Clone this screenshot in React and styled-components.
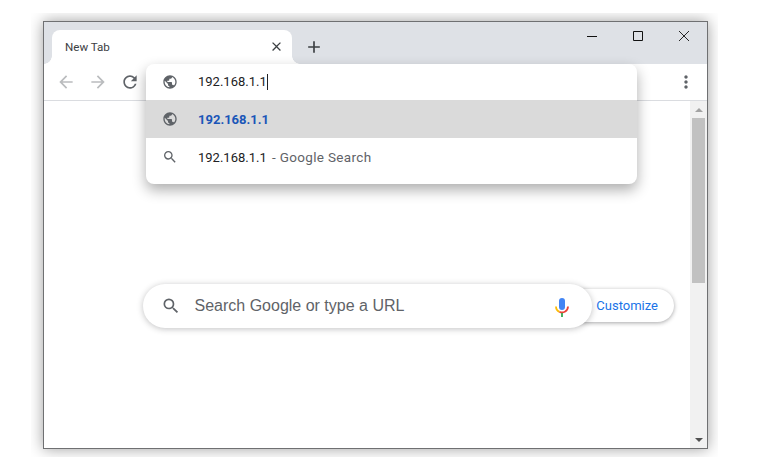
import React from "react";
import styled, { createGlobalStyle } from "styled-components";
import {
  MdAdd,
  MdArrowBack,
  MdArrowForward,
  MdClose,
  MdMoreVert,
  MdPublic,
  MdRefresh,
  MdSearch,
} from "react-icons/md";

const GlobalStyle = createGlobalStyle`
  html, body {
    margin: 0;
    padding: 0;
    width: 773px;
    height: 470px;
    overflow: hidden;
    background: #fff;
    font-family: Roboto, "Liberation Sans", sans-serif;
  }
`;

const ShadowClip = styled.div`
  box-sizing: border-box;
  width: 687px;
  height: 444px;
  margin: 13px 0 0 31px;
  padding: 8px 10px 8px 12px;
  overflow: hidden;
`;

const Window = styled.div`
  position: relative;
  box-sizing: border-box;
  height: 100%;
  display: flex;
  flex-direction: column;
  border: 1px solid #6f7072;
  background: #fff;
  box-shadow: 0 0 14px rgba(0, 0, 0, 0.38);
`;

const TitleBar = styled.div`
  height: 42px;
  flex: none;
  display: flex;
  align-items: flex-end;
  padding-left: 8px;
  background: #dee1e6;
`;

const Tab = styled.div`
  position: relative;
  box-sizing: border-box;
  width: 240px;
  height: 34px;
  display: flex;
  align-items: center;
  justify-content: space-between;
  padding: 0 8px 1px 13px;
  background: #fff;
  border-radius: 8px 8px 0 0;
  font-size: 11.6px;
  color: #3c4043;

  &::before,
  &::after {
    content: "";
    position: absolute;
    bottom: 0;
    width: 8px;
    height: 8px;
  }
  &::before {
    left: -8px;
    background: radial-gradient(circle at 0 0, #dee1e6 7.5px, #fff 8px);
  }
  &::after {
    right: -8px;
    background: radial-gradient(circle at 100% 0, #dee1e6 7.5px, #fff 8px);
  }
`;

const NewTab = styled.div`
  display: flex;
  align-items: center;
  height: 34px;
  margin-left: 12px;
  color: #3c4043;
`;

const WindowControls = styled.div`
  margin-left: auto;
  align-self: flex-start;
  display: flex;
  gap: 36px;
  padding: 9px 18px 0 0;
`;

const Toolbar = styled.div`
  box-sizing: border-box;
  height: 37px;
  flex: none;
  display: flex;
  align-items: center;
  padding: 0 11px 1px 12px;
  gap: 12px;
  background: #fff;
  border-bottom: 1px solid #dadce0;
`;

const NavIcon = styled.span`
  display: flex;
  color: ${(p) => (p.$off ? "#babcbe" : "#5f6368")};
`;

const MenuIcon = styled(NavIcon)`
  margin-left: auto;
`;

const Popup = styled.div`
  position: absolute;
  top: 42px;
  left: 102px;
  width: 491px;
  height: 120px;
  background: #fff;
  border-radius: 8px;
  box-shadow: 0 6px 14px rgba(0, 0, 0, 0.32);
  z-index: 2;
`;

const PopupRow = styled.div`
  display: flex;
  align-items: center;
  height: ${(p) => p.$height}px;
  padding-left: 16px;
  gap: 20px;
  font-size: 13px;
  color: #202124;
  background: ${(p) => (p.$selected ? "#dadada" : "transparent")};
`;

const RowIcon = styled.span`
  display: flex;
  width: 16px;
  color: #5f6368;
`;

const InputText = styled.span`
  border-right: 1px solid #202124;
  line-height: 16px;
`;

const Match = styled.span`
  font-weight: 700;
  color: #1a56b8;
`;

const Hint = styled.span`
  color: #5f6368;
  margin-left: 2px;
  font-size: 13.5px;
  letter-spacing: 0.33px;
`;

const Body = styled.div`
  flex: 1;
  display: flex;
  min-height: 0;
`;

const Page = styled.div`
  position: relative;
  flex: 1;
  display: flex;
  justify-content: center;
  align-items: flex-start;
  padding-top: 183px;
`;

const SearchBox = styled.div`
  position: relative;
  z-index: 1;
  box-sizing: border-box;
  width: 449px;
  height: 44px;
  display: flex;
  align-items: center;
  gap: 14px;
  padding: 0 20px 0 18px;
  background: #fff;
  border-radius: 22px;
  box-shadow: 0 1px 6px rgba(32, 33, 36, 0.28);
  font-family: "Liberation Sans", Arial, sans-serif;
  font-size: 16px;
  color: #5f6368;
`;

const Mic = styled.svg`
  margin-left: auto;
  margin-top: 3px;
  margin-right: 3px;
`;

const Customize = styled.div`
  position: absolute;
  top: 188px;
  right: 16px;
  box-sizing: border-box;
  width: 130px;
  height: 33px;
  display: flex;
  align-items: center;
  justify-content: flex-end;
  padding-right: 16px;
  background: #fff;
  border-radius: 17px;
  box-shadow: 0 1px 4px rgba(32, 33, 36, 0.4);
  font-size: 13px;
  color: #1a73e8;
`;

const Scrollbar = styled.div`
  width: 17px;
  flex: none;
  display: flex;
  flex-direction: column;
  align-items: center;
  background: #f1f1f1;
`;

const ArrowSlot = styled.div`
  height: 17px;
  flex: none;
  display: flex;
  align-items: center;
  justify-content: center;
`;

const Arrow = styled.div`
  width: 0;
  height: 0;
  border-left: 4px solid transparent;
  border-right: 4px solid transparent;
  ${(p) =>
    p.$down ? "border-top: 4px solid #505050;" : "border-bottom: 4px solid #a3a3a3;"}
`;

const Thumb = styled.div`
  width: 13px;
  height: 165px;
  background: #c1c1c1;
`;

const Track = styled.div`
  flex: 1;
`;

const App = () => {
  return (
    <>
      <GlobalStyle />
      <ShadowClip>
        <Window>
          <TitleBar>
            <Tab>
              New Tab
              <MdClose size={15} color="#3c4043" />
            </Tab>
            <NewTab>
              <MdAdd size={20} />
            </NewTab>
            <WindowControls>
              <svg width="10" height="10" viewBox="0 0 10 10">
                <path d="M0 5.5h10" stroke="#111" fill="none" />
              </svg>
              <svg width="10" height="10" viewBox="0 0 10 10">
                <path d="M.5.5h9v9h-9z" stroke="#111" fill="none" />
              </svg>
              <svg width="10" height="10" viewBox="0 0 10 10">
                <path d="M0 0l10 10M10 0L0 10" stroke="#111" strokeWidth=".9" fill="none" />
              </svg>
            </WindowControls>
          </TitleBar>
          <Toolbar>
            <NavIcon $off>
              <MdArrowBack size={20} />
            </NavIcon>
            <NavIcon $off>
              <MdArrowForward size={20} />
            </NavIcon>
            <NavIcon>
              <MdRefresh size={20} />
            </NavIcon>
            <MenuIcon>
              <MdMoreVert size={20} />
            </MenuIcon>
          </Toolbar>
          <Popup>
            <PopupRow $height={36}>
              <RowIcon>
                <MdPublic size={16} />
              </RowIcon>
              <InputText>192.168.1.1</InputText>
            </PopupRow>
            <PopupRow $height={38} $selected>
              <RowIcon>
                <MdPublic size={16} />
              </RowIcon>
              <Match>192.168.1.1</Match>
            </PopupRow>
            <PopupRow $height={38}>
              <RowIcon>
                <MdSearch size={16} />
              </RowIcon>
              <span>
                192.168.1.1 <Hint>- Google Search</Hint>
              </span>
            </PopupRow>
          </Popup>
          <Body>
            <Page>
              <SearchBox>
                <MdSearch size={20} />
                Search Google or type a URL
                <Mic width="14" height="19" viewBox="0 0 14 19">
                  <rect x="4" y="0" width="6" height="12" rx="3" fill="#4285f4" />
                  <path d="M1 8.5a6 6 0 0 0 3.5 5.4" stroke="#fbbc05" strokeWidth="1.8" fill="none" />
                  <path d="M4.5 13.9a6 6 0 0 0 8.5-5.4" stroke="#ea4335" strokeWidth="1.8" fill="none" />
                  <path d="M7 15v4" stroke="#34a853" strokeWidth="1.8" fill="none" />
                </Mic>
              </SearchBox>
              <Customize>Customize</Customize>
            </Page>
            <Scrollbar>
              <ArrowSlot>
                <Arrow />
              </ArrowSlot>
              <Thumb />
              <Track />
              <ArrowSlot>
                <Arrow $down />
              </ArrowSlot>
            </Scrollbar>
          </Body>
        </Window>
      </ShadowClip>
    </>
  );
};

export default App;
